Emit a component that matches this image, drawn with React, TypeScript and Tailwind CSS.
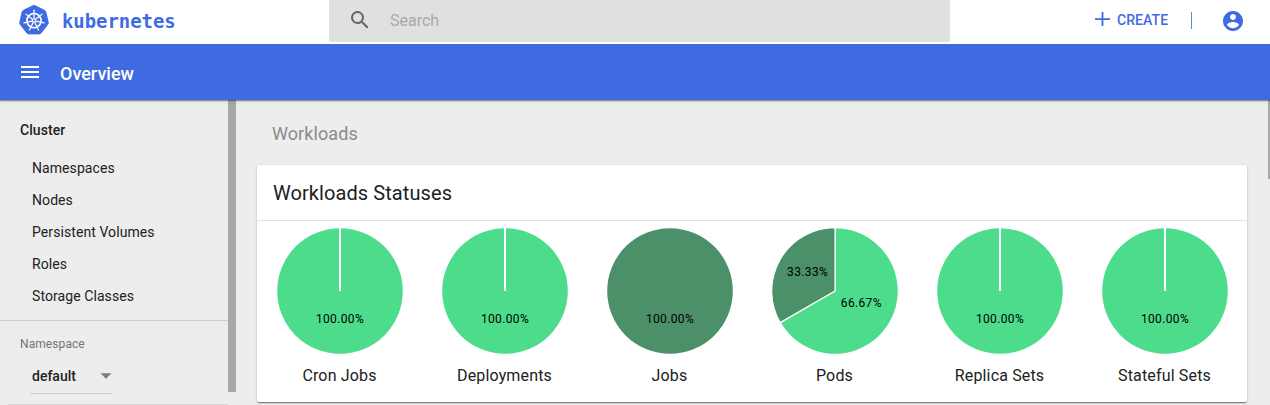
import React from "react";

type Slice = { value: number; color: string };
type Status = { name: string; slices: Slice[]; solid?: boolean };

const GREEN = "#4ddb8c";
const DARK_GREEN = "#4b9069";

const statuses: Status[] = [
  { name: "Cron Jobs", slices: [{ value: 100, color: GREEN }] },
  { name: "Deployments", slices: [{ value: 100, color: GREEN }] },
  { name: "Jobs", slices: [{ value: 100, color: DARK_GREEN }], solid: true },
  {
    name: "Pods",
    slices: [
      { value: 66.67, color: GREEN },
      { value: 33.33, color: DARK_GREEN },
    ],
  },
  { name: "Replica Sets", slices: [{ value: 100, color: GREEN }] },
  { name: "Stateful Sets", slices: [{ value: 100, color: GREEN }] },
];

const clusterItems = ["Namespaces", "Nodes", "Persistent Volumes", "Roles", "Storage Classes"];

const C = 64;
const R = 62.8;

function polar(fraction: number, radius: number): [number, number] {
  const a = fraction * 2 * Math.PI;
  return [C + radius * Math.sin(a), C - radius * Math.cos(a)];
}

function Pie({ slices, solid }: { slices: Slice[]; solid?: boolean }) {
  let start = 0;
  const parts = slices.map((s) => {
    const from = start;
    start += s.value / 100;
    return { ...s, from, to: start, mid: (from + start) / 2 };
  });
  const whole = parts.length === 1;
  return (
    <svg width="128" height="128" viewBox="0 0 128 128" className="block">
      {whole ? (
        <>
          <circle cx={C} cy={C} r={R} fill={parts[0].color} />
          {!solid && <rect x="63" y="0" width="2" height="64" fill="#fff" />}
        </>
      ) : (
        parts.map((p) => {
          const [x1, y1] = polar(p.from, 63.3);
          const [x2, y2] = polar(p.to, 63.3);
          const large = p.to - p.from > 0.5 ? 1 : 0;
          return (
            <path
              key={p.from}
              d={`M${C} ${C}L${x1} ${y1}A63.3 63.3 0 ${large} 1 ${x2} ${y2}Z`}
              fill={p.color}
              stroke="#fff"
              strokeWidth="1.2"
            />
          );
        })
      )}
      {parts.map((p) => {
        const [tx, ty] = whole ? [C, 96] : polar(p.mid, 31);
        return (
          <text
            key={p.from}
            x={whole ? tx : tx - 0.5}
            y={whole ? ty : ty + 0.5}
            textAnchor="middle"
            className="text-[12px] tracking-[0.03em]"
            fill="#000"
          >
            {p.value.toFixed(2)}%
          </text>
        );
      })}
    </svg>
  );
}

const spokes = [0, 1, 2, 3, 4, 5, 6].map((i) => (i * 360) / 7);

function Logo() {
  return (
    <svg width="30" height="31" viewBox="0 0 30 31" className="block">
      <path
        d="M13.8 .8Q15 .2 16.2 .8L25.3 5.2Q26.5 5.8 26.8 7L29.2 17.2Q29.5 18.5 28.7 19.5L22.3 27.7Q21.4 28.9 20 28.9H10Q8.6 28.9 7.7 27.7L1.3 19.5Q.5 18.5 .8 17.2L3.2 7Q3.5 5.8 4.7 5.2Z"
        fill="#3f6be2"
        stroke="#3f6be2"
        strokeWidth="1"
      />
      <g stroke="#fff" fill="none" strokeLinecap="round">
        <circle cx="15" cy="15.6" r="7.1" strokeWidth="1.6" />
        {spokes.map((a) => (
          <path key={a} d="M15 13.6V5.2" strokeWidth="1.25" transform={`rotate(${a} 15 15.6)`} />
        ))}
        <circle cx="15" cy="15.6" r="1.6" strokeWidth="1.1" />
      </g>
    </svg>
  );
}

export default function App() {
  return (
    <div className="flex h-[405px] w-[1270px] flex-col overflow-hidden bg-[#ededed] font-['Roboto',sans-serif] tracking-[0.005em] text-[#212121]">
      <header className="flex h-11 shrink-0 items-start bg-white text-[#3f6be2]">
        <div className="flex w-[329px] items-start pl-[19px] pt-[5px]">
          <Logo />
          <span className="ml-[13px] mt-[4px] font-['DejaVu_Sans_Mono',monospace] text-[18.9px] font-bold leading-6 tracking-normal">
            kubernetes
          </span>
        </div>
        <div className="flex h-[42px] w-[621px] items-start rounded-b-[2px] bg-[#e0e0e0]">
          <svg width="24" height="24" viewBox="0 0 24 24" className="ml-[19px] mt-2" fill="#666">
            <path d="M15.5 14h-.79l-.28-.27A6.471 6.471 0 0 0 16 9.5 6.5 6.5 0 1 0 9.5 16c1.61 0 3.09-.59 4.23-1.57l.27.28v.79l5 4.99L20.49 19l-4.99-5zm-6 0C7.01 14 5 11.99 5 9.5S7.01 5 9.5 5 14 7.01 14 9.5 11.99 14 9.5 14z" />
          </svg>
          <span className="ml-[18px] mt-[9px] text-base tracking-normal text-[#a9a9a9]">Search</span>
        </div>
        <div className="flex flex-1 items-start">
          <svg width="15" height="14" viewBox="0 0 15 14" className="ml-[145px] mt-3" fill="#3f6be2">
            <path d="M6.6 0h1.8v6.2H15v1.7H8.4V14H6.6V7.9H0V6.2h6.6z" />
          </svg>
          <span className="ml-[7px] mt-[10px] text-sm font-medium">CREATE</span>
          <span className="ml-[23px] mt-3 h-[17px] w-px bg-[#5f84e8]" />
          <svg width="24" height="24" viewBox="0 0 24 24" className="ml-[29px] mt-[9px]" fill="#3f6be2">
            <path d="M12 2C6.48 2 2 6.48 2 12s4.48 10 10 10 10-4.48 10-10S17.52 2 12 2zm0 3c1.66 0 3 1.34 3 3s-1.34 3-3 3-3-1.34-3-3 1.34-3 3-3zm0 14.2c-2.5 0-4.71-1.28-6-3.22.03-1.99 4-3.08 6-3.08 1.99 0 5.97 1.09 6 3.08-1.29 1.94-3.5 3.22-6 3.22z" />
          </svg>
        </div>
      </header>

      <div className="relative flex h-14 shrink-0 items-start bg-[#3f6be2] text-white shadow-[0_1px_1px_rgba(0,0,0,0.35),0_2px_3px_rgba(0,0,0,0.1)]">
        <svg width="24" height="24" viewBox="0 0 24 24" className="ml-[18px] mt-4" fill="#fff">
          <path d="M3 18h18v-2H3v2zm0-5h18v-2H3v2zm0-7v2h18V6H3z" />
        </svg>
        <h1 className="ml-[18px] mt-4 text-lg font-medium leading-7 tracking-normal">Overview</h1>
      </div>

      <div className="flex min-h-0 flex-1">
        <nav className="flex w-[228px] shrink-0 flex-col text-sm">
          <div className="mt-5 pl-5 font-medium leading-5">Cluster</div>
          <ul className="mt-3">
            {clusterItems.map((item) => (
              <li key={item} className="h-8 pl-8 leading-8">
                {item}
              </li>
            ))}
          </ul>
          <div className="mt-2 h-px shrink-0 bg-[#cecece]" />
          <div className="mt-[15px] pl-5 text-xs leading-4 text-[#757575]">Namespace</div>
          <div className="ml-[30px] mt-[10px] flex h-[32px] w-[83px] shrink-0 border-b border-[#cfcfcf] pl-0.5">
            <span className="mt-1 font-medium leading-5 tracking-normal">default</span>
            <svg width="12" height="6" viewBox="0 0 12 6" className="ml-auto mr-px mt-[11px]" fill="#7c7c7c">
              <path d="M.5 .2h11L6 5.8z" />
            </svg>
          </div>
          <div className="ml-2 mt-[10px] h-px shrink-0 bg-[#d8d8d8]" />
        </nav>
        <div className="h-[292px] w-2 shrink-0 bg-[#a9a9a9]" />

        <main className="flex flex-1 flex-col pl-[21px] pt-[22px]">
          <h2 className="pl-[15px] text-lg leading-6 text-[#8b8b8b]">Workloads</h2>
          <section className="mt-[19px] h-[237px] w-[990px] rounded-[2px] bg-white shadow-[0_1px_3px_0_rgba(0,0,0,0.2),0_1px_1px_0_rgba(0,0,0,0.14),0_2px_1px_-1px_rgba(0,0,0,0.3)]">
            <h3 className="h-14 border-b border-[#e0e0e0] pl-4 text-xl leading-[56px]">Workloads Statuses</h3>
            <div className="grid grid-cols-6 pt-[6px]">
              {statuses.map((s) => (
                <div key={s.name} className="flex flex-col">
                  <div className="pl-[19px]">
                    <Pie slices={s.slices} solid={s.solid} />
                  </div>
                  <div className="mt-[9px] text-center text-base leading-6 tracking-[0.01em]">{s.name}</div>
                </div>
              ))}
            </div>
          </section>
        </main>
        <div className="h-[79px] w-0.5 shrink-0 bg-[#a9a9a9]" />
      </div>
    </div>
  );
}
